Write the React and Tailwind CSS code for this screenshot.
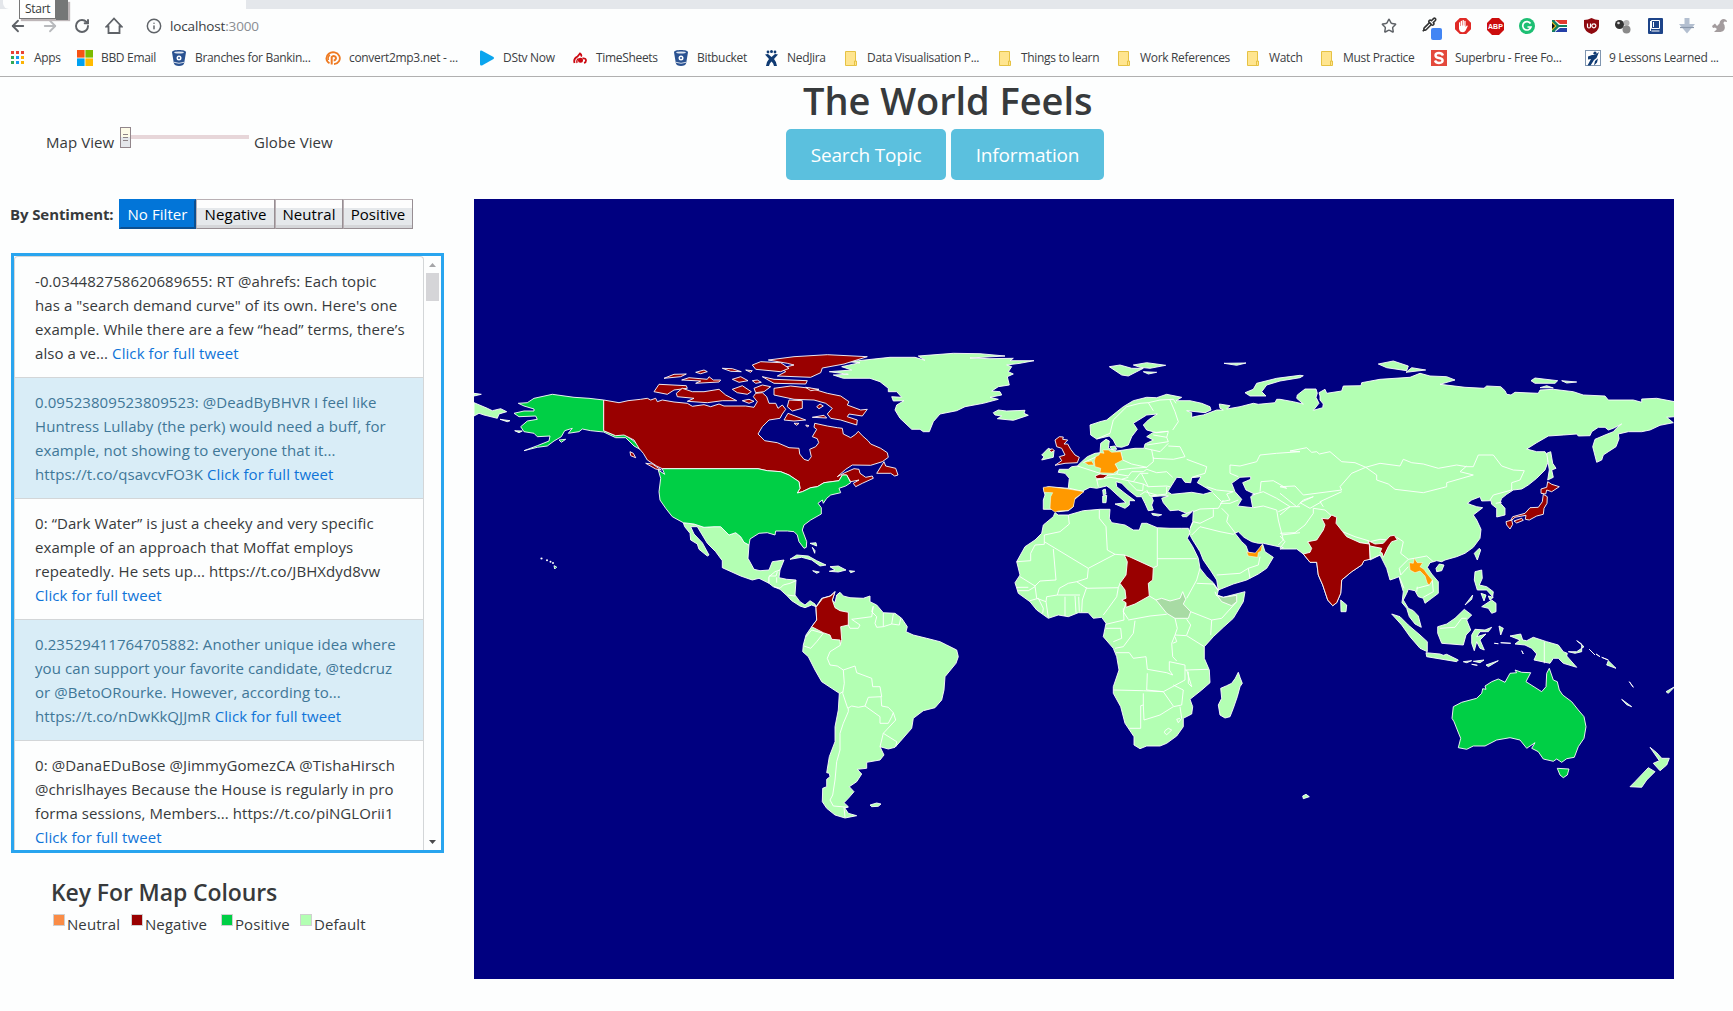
import React from "react";
import { ArrowLeft, ArrowRight, RotateCw, Info, Star, Pipette } from "lucide-react";

/* ---------- map data ----------
   Each ring is a list of points; a letter switches to the sheet
   whose origin the following points are measured from (3 units per pixel). */
const SHEETS = {
  A: [474, 340], B: [780, 340], C: [1000, 340],
  D: [1000, 500], E: [1280, 340], F: [1280, 500],
};
function pts(src) {
  let o = SHEETS.A;
  const out = [];
  for (const t of src.trim().split(/\s+/)) {
    if (SHEETS[t]) { o = SHEETS[t]; continue; }
    const [x, y] = t.split(",").map(Number);
    out.push((o[0] + x / 3).toFixed(1) + "," + (o[1] + y / 3).toFixed(1));
  }
  return out.join(" ");
}

const DEFAULT = "#b3ffb3";
const NEG = "#990000";
const POS = "#00cf45";
const NEU = "#ff9900";
const SEA = "#000080";

const LAND = [
  // Eurasia
  "C 270,255 300,245 320,240 345,220 370,200 400,182 440,172 470,173 500,163 545,172 528,182 570,182 605,190 630,200 633,210 615,218 560,212 575,218 575,232 592,228 610,225 650,210 670,210 660,205 658,192 690,197 680,207 720,200 760,190 775,193 825,188 830,178 E 0,178 40,185 70,192 50,175 52,165 75,147 108,147 112,160 108,172 117,190 100,211 128,203 130,192 120,180 120,168 117,158 135,148 140,160 185,153 190,138 243,137 245,128 300,118 390,112 420,100 450,108 500,110 525,120 480,133 555,142 612,145 620,138 662,140 675,152 680,163 693,165 705,157 775,160 780,150 820,148 880,155 910,165 975,168 985,180 1060,180 1085,187 1085,177 1130,175 1184,185 1184,230 1160,232 1180,248 1140,256 1110,270 1085,275 1045,275 1015,282 1017,296 1008,320 985,335 970,345 965,360 950,367 938,320 945,298 975,285 1000,275 1012,262 1025,252 1000,265 985,270 975,262 955,262 935,275 930,287 895,288 890,282 850,285 805,288 770,308 740,327 770,335 795,335 805,350 803,368 795,390 770,415 745,435 725,447 700,450 680,463 665,475 660,488 675,505 675,525 650,531 650,505 635,493 633,482 605,483 600,470 575,480 562,490 575,495 590,500 608,503 580,525 590,540 603,568 600,595 580,622 555,640 530,650 495,660 F 485,185 470,182 450,188 442,202 455,222 475,245 475,280 455,295 435,310 430,295 415,290 405,272 385,268 380,280 370,300 385,325 400,332 415,348 424,382 405,372 388,350 380,325 366,308 370,275 357,230 345,235 330,240 320,205 305,175 300,165 270,178 252,180 245,195 215,215 185,240 182,280 170,308 158,317 143,300 128,255 115,225 110,187 90,187 70,162 50,147 0,147 D 850,143 790,130 775,130 755,125 732,112 715,95 705,100 725,125 738,137 745,157 768,162 788,133 795,155 820,172 800,205 775,222 740,240 700,252 655,270 650,240 632,212 610,180 600,155 578,120 567,100 572,80 C 578,545 580,512 560,520 535,510 510,512 490,488 485,475 505,468 480,468 455,470 460,482 455,495 460,510 445,512 435,490 425,470 410,470 385,450 365,430 348,425 350,440 375,460 405,482 388,482 388,495 375,505 345,492 378,488 355,468 330,445 320,438 290,445 270,442 250,452 245,460 222,480 220,500 205,512 175,515 155,508 130,508 130,480 135,465 130,445 145,440 205,445 208,415 195,400 175,397 178,388 205,388 215,380 232,378 245,365 262,350 285,340 300,338 302,310 318,298 328,303 325,325 350,333 405,325 432,325 435,312 460,300 440,290 458,278 505,274 470,278 440,270 430,255 445,240 472,222 440,225 400,250 412,268 395,290 385,315 365,322 350,320 340,300 328,288 290,297 272,285",
  // Africa
  "D 165,38 175,45 205,45 250,32 300,28 330,28 328,55 335,68 375,75 400,90 418,90 425,70 440,70 472,83 510,85 545,85 565,85 570,97 562,115 578,140 595,175 600,205 620,230 640,248 655,270 652,285 670,292 735,275 730,305 700,355 670,382 640,410 613,440 613,475 628,510 630,548 605,570 570,598 578,620 575,642 550,655 550,680 530,708 500,730 480,738 440,738 420,746 402,735 402,710 375,670 362,620 340,580 340,560 357,510 350,470 340,445 310,410 318,370 305,352 280,355 265,338 235,338 205,350 175,345 145,355 110,330 90,305 55,280 45,248 60,225 50,185 75,140 105,120 125,100 130,75 160,50",
  "D 715,517 720,532 727,550 720,560 712,590 700,625 690,650 675,654 660,645 655,615 665,595 662,565 680,557 695,550 706,535",
  // Mexico
  "A 628,548 660,552 690,562 715,560 740,560 765,585 785,578 800,590 810,607 825,615 822,655 840,688 858,692 885,690 895,665 930,660 918,690 905,698 885,710 885,730 855,715 835,720 800,708 745,683 745,662 725,635 700,610 670,560 650,560 660,582 685,608 705,645 700,648 675,628 670,612 650,600 648,580 632,560",
  "B -33,730 -33,710 -15,695 0,690 -3,713 20,718 48,720 45,765 60,785 75,795 90,782 105,792 108,800 95,795 75,803 60,798 35,782 22,768 0,748 -20,740",
  // South America
  "B 108,800 125,775 150,768 165,755 157,780 165,788 170,765 180,757 190,768 210,773 250,775 270,768 270,785 290,795 310,818 345,820 365,835 382,860 378,875 400,885 440,895 480,905 500,915 530,930 535,950 528,970 495,1010 492,1050 485,1080 465,1103 430,1112 400,1135 395,1165 360,1205 345,1222 325,1227 300,1220 312,1245 300,1260 260,1267 260,1285 232,1288 245,1302 230,1325 208,1340 222,1355 205,1375 192,1388 205,1400 195,1405 205,1420 230,1427 195,1434 165,1425 140,1405 127,1385 128,1345 140,1340 140,1318 150,1310 148,1300 140,1298 148,1250 165,1205 165,1160 175,1110 178,1060 125,1025 105,990 85,950 68,935 70,915 78,885 95,860 110,840 108,810",
  "B 270,1395 290,1389 303,1392 295,1399 275,1400",
  // Greenland, Iceland
  "B 148,95 215,90 185,80 240,68 205,65 235,62 330,52 405,52 435,61 415,48 520,40 600,41 675,48 570,54 630,56 700,55 690,62 762,62 720,70 680,75 695,80 685,95 700,102 682,110 688,135 655,140 635,153 660,155 665,165 630,172 655,178 610,190 555,200 530,212 480,222 460,245 448,275 430,275 420,268 395,268 360,235 345,210 350,195 372,182 340,183 335,170 365,172 350,155 325,155 325,145 300,125 270,115 190,115 160,105 205,103",
  "B 640,218 655,210 680,213 735,211 732,220 745,226 700,241 652,236 665,228 645,225",
  // Caribbean
  "B 30,658 50,645 85,648 110,662 138,675 120,678 95,660 65,652",
  "B 150,680 175,678 198,690 175,696 148,694 165,690", "B 98,692 118,696 110,700", "B 208,692 224,694 212,698",
  "B 90,610 108,608 110,618", "B 97,622 105,632 104,640",
  // Eastern Siberia on the left edge
  "A 0,188 40,205 55,212 80,206 98,215 75,222 70,235 30,225 15,220 0,228", "A 0,160 22,163 0,168", "A 78,238 108,242 100,245", "A 122,272 145,273 135,278",
  // Ireland and small European islands
  "C 125,345 145,325 162,332 160,352 125,360 132,350", "C 308,450 316,447 318,462 310,466", "C 308,468 320,466 318,488 308,488",
  "C 455,520 485,524 475,528 458,525", "C 545,525 575,516 560,530 548,530", "C 330,320 345,318 350,328 335,328",
  // Arctic islands
  "C 328,80 360,75 395,85 430,85 410,95 385,108 365,105", "C 400,75 440,68 497,76 450,85 420,82", "C 430,95 470,97 445,102",
  "C 672,70 738,69 710,76", "C 735,158 760,148 770,130 830,115 900,106 E 70,107 60,113 0,123 C 800,135 785,155 798,168 750,168",
  "E 295,72 340,63 385,78 380,92 320,83", "E 378,97 395,83 437,90", "E 753,122 765,114 833,122 825,130 765,130", "E 780,143 800,137 820,144", "E 845,122 890,126 860,129",
  // Sakhalin
  "E 800,340 812,335 818,370 828,385 815,390 820,412 803,420 808,390",
  // Asian islands
  "F 583,160 598,145 602,150 592,180", "F 468,205 478,192 492,195 485,212 470,215", "F 182,300 200,315 198,335 183,335",
  "F 585,215 605,210 607,235 598,255 620,260 640,275 638,290 620,270 592,270 583,240", "F 603,280 618,285 612,303", "F 605,320 635,300 648,310 648,335 635,340 625,325",
  "F 625,288 640,292 630,300", "F 555,315 578,285 575,298",
  "F 335,342 360,350 385,375 420,405 442,425 442,455 420,445 390,410 365,375", "F 438,458 480,462 490,466 500,463 535,480 530,485 440,470",
  "F 473,380 500,372 525,355 553,328 575,345 560,360 572,390 558,405 550,435 485,430 473,400",
  "F 575,405 585,388 615,390 635,382 625,395 600,395 590,410 618,402 600,420 613,450 600,445 590,425 583,452 575,430",
  "F 550,485 575,482 560,488", "F 580,484 612,480 600,488", "F 575,493 592,496", "F 618,495 655,482 625,500",
  "F 657,378 670,385 662,405", "F 643,430 655,431", "F 662,428 692,430", "F 725,452 730,462",
  "F 690,408 722,402 728,420 740,422 760,412 800,425 835,435 850,455 862,460 860,468 890,502 850,490 835,475 820,475 810,490 762,480 770,462 755,445 735,435 705,432 720,420",
  "F 865,455 890,455 912,440 890,422 905,432 905,455 885,460", "F 928,448 945,465", "F 948,462 960,470", "F 965,472 985,480", "F 985,482 1008,505 980,495",
  "F 1048,545 1060,562", "F 1025,598 1055,620 1040,614", "F 1158,575 1184,560 1165,580",
  "F 1110,742 1130,758 1145,775 1168,775 1160,795 1140,812 1120,790 1138,782", "F 1105,803 1125,815 1100,840 1085,862 1050,860 1065,845",
  "F 68,888 78,883 88,890 70,896",
];

const SEAS = [
  "C 503,455 530,412 545,413 555,427 572,428 575,413 603,410 592,428 638,455 610,463 575,457 515,463",
  "C 695,430 720,412 752,410 752,418 728,428 738,450 765,463 752,470 758,503 713,498 725,478 705,455",
];

const NATIONS = [
  [POS, "A 389,180 345,175 300,172 235,163 180,175 160,188 133,190 150,198 180,207 180,213 150,213 120,220 135,230 185,228 190,238 160,243 140,260 150,275 180,280 190,290 228,288 225,303 190,317 150,332 190,322 220,318 240,303 262,290 272,272 295,265 283,280 315,275 325,267 350,272 389,276 425,293 455,293 480,318 498,328 497,318 475,300 450,282 425,287 389,272"],
  [NEG, "A 389,180 435,188 462,182 500,178 520,175 530,180 545,175 550,185 565,180 600,186 640,190 655,199 690,194 710,200 735,192 750,198 815,198 840,202 850,185 838,170 845,160 865,158 878,170 885,190 905,190 912,205 925,195 935,208 925,222 918,235 885,240 865,260 852,282 872,302 910,308 945,323 975,325 977,342 990,358 1003,362 1012,350 1007,328 1025,320 1034,308 1030,296 1015,290 1028,268 1020,262 1022,250 1060,258 1090,263 1105,265 1108,282 1130,293 1145,283 1153,274 1165,287 1182,302 1190,312 1220,325 1240,338 1243,352 1225,365 1190,376 1135,375 1115,388 1090,410 1112,398 1140,386 1155,388 1158,400 1175,412 1195,408 1198,415 1165,430 1145,440 1138,430 1155,420 1130,425 1118,405 1105,405 1095,422 1050,428 1030,440 1010,443 985,455 970,459 978,445 975,425 945,405 920,395 880,392 852,386 565,386 548,378 520,360 508,340 495,325 480,300 450,285 425,287 389,272"],
  [POS, "A 565,386 852,386 880,392 920,395 945,405 975,425 978,445 970,459 985,455 1010,443 1030,440 1050,428 1095,422 1105,405 1118,405 1130,428 1115,438 1095,445 1100,458 1070,465 1058,475 1048,490 1045,480 1032,490 1042,503 1042,522 1010,540 990,555 985,570 998,605 997,622 990,625 975,605 970,585 960,575 940,573 905,573 903,585 880,578 855,580 828,597 825,615 810,607 800,590 785,578 765,585 740,560 720,560 690,562 660,552 628,548 595,530 575,505 558,480 555,455 560,415 553,390 572,403"],
  [POS, "A 240,677 248,681 242,687"],
  [POS, "A 255,300 275,298 262,307"],
  [NEG, "A 883,60 960,50 1060,44 1180,50 1110,72 1045,84 1040,98 1010,112 910,108 935,95 920,85 960,75 940,70"],
  [NEG, "A 835,75 860,65 920,68 945,85 920,95 845,88"],
  [NEG, "A 865,110 900,118 1000,122 995,132 900,130"],
  [NEG, "A 900,145 950,138 1010,145 1060,160 1100,168 1125,185 1120,195 1160,210 1180,208 1165,228 1125,222 1120,230 1150,240 1148,255 1100,240 1070,235 1060,222 1075,205 1055,190 1020,180 960,178 900,165"],
  [NEG, "A 945,180 985,182 985,205 955,213 940,200"],
  [NEG, "A 930,240 942,220 995,240 960,243"], [NEG, "A 1015,232 1050,226 1058,234"], [NEG, "A 1028,200 1038,192 1048,198 1035,206"],
  [NEG, "A 540,155 555,133 637,137 640,145 600,150 580,163"],
  [NEG, "A 607,160 625,145 655,155 690,155 735,148 755,165 788,182 745,182 700,188 640,184 660,175 610,170"],
  [NEG, "A 570,115 600,103 637,102 620,110"], [NEG, "A 623,120 645,113 700,118 705,110 718,120 740,120 735,126 665,130 680,123"],
  [NEG, "A 775,118 800,110 822,122 795,127"], [NEG, "A 775,148 805,137 832,155 820,163 790,158"], [NEG, "A 745,85 775,86 802,95 770,94"],
  [NEG, "A 665,97 690,90 700,95 680,101"], [NEG, "A 815,90 835,92 830,97"], [NEG, "A 840,145 865,135 890,140 870,155 845,158"], [NEG, "A 805,182 825,178 840,184 825,190"],
  [NEG, "A 835,122 850,120 862,127 845,130"], [NEG, "A 995,142 1035,148 1010,152"], [NEG, "A 960,250 975,250 968,256"], [NEG, "A 995,255 1005,257 1000,261"],
  [NEG, "A 468,335 478,340 485,353 470,347"], [NEG, "A 515,370 535,372 562,390 545,387"], [NEG, "A 1208,400 1230,365 1235,378 1265,385 1272,405 1262,408 1250,400"],
  [NEG, "B 108,802 128,775 152,768 165,755 157,780 165,803 180,812 205,817 205,855 182,860 185,898 181,914 180,900 155,898 150,885 130,878 95,860 110,840"],
  [NEG, "C 165,300 178,290 190,291 188,298 203,300 192,312 203,312 212,328 225,345 238,352 232,368 195,370 165,376 185,362 178,350 195,345 185,325 170,320"],
  [NEG, "C 148,330 157,326 163,332 153,337"],
  [NEU, "C 283,362 287,350 297,345 300,338 312,340 308,330 325,330 335,337 362,335 368,360 345,372 355,390 340,400 300,398 302,385 285,380"],
  [NEU, "C 253,367 275,363 282,375 265,375"],
  [NEG, "C 285,408 300,402 325,405 310,415 290,416"],
  [NEU, "C 130,442 148,440 205,447 235,452 252,455 225,475 220,500 205,511 175,513 165,517 150,505 152,470 158,458 132,457"],
  [NEU, "D 740,156 766,159 787,133 784,152 775,158 773,172 745,168"],
  [NEG, "D 373,165 388,170 460,203 458,240 445,250 448,288 405,312 378,322 378,308 365,300 378,295 375,270 360,250 378,225 382,185"],
  ["#a8dba4", "D 468,300 485,295 510,303 540,295 548,275 557,298 550,312 572,335 565,355 525,355 500,340"],
  ["#a8dba4", "D 652,287 670,292 710,286 710,305 695,317 665,305"],
  [NEG, "F 125,55 145,57 155,45 170,52 168,70 188,95 200,110 240,128 268,132 270,178 252,182 245,195 215,215 185,240 182,280 170,308 158,317 143,300 128,255 115,225 110,187 90,187 70,162 90,157 95,145 83,125 110,120 130,90 135,75"],
  [NEG, "F 265,122 285,132 310,130 330,108 343,106 352,120 335,125 325,140 310,172 306,158 300,158 305,145 270,138"],
  [NEU, "F 403,175 412,188 428,188 420,200 432,208 440,220 457,240 448,255 442,250 435,228 420,213 405,218 390,210 388,188 400,190"],
  [NEG, "E 803,425 815,433 838,440 815,455 800,450 797,462 783,460 783,447 800,442"],
  [NEG, "E 790,463 802,470 801,490 792,505 790,523 770,528 748,540 736,538 738,526 705,532 690,545 698,530 735,520 750,503 775,502 787,485"],
  [NEG, "E 678,545 695,540 698,553 690,567 680,555"], [NEG, "E 702,543 725,535 730,541 710,549"],
  [POS, "F 520,620 545,607 590,595 605,580 608,566 618,568 615,558 635,545 655,537 675,547 690,520 710,518 705,510 725,517 752,518 738,545 785,575 798,560 800,520 808,505 820,540 832,545 838,570 848,585 875,605 895,630 912,650 918,680 912,715 895,740 883,772 860,776 845,787 830,777 820,784 790,777 775,755 755,745 765,728 740,745 720,720 690,713 650,720 615,738 580,738 560,748 535,743 542,715 532,690 522,665 516,655"],
  [POS, "F 832,805 867,807 862,825 850,833 840,825"],
];

const BORDERS = [
  // Central and South America
  "B -18,740 0,745 10,735 30,730 48,722", "B -10,712 -10,728", "B 22,765 45,768", "B -33,708 -12,708 -8,695",
  "B 205,818 205,855 210,865 235,865 240,855 215,838 275,830 280,800", "B 280,798 275,815 290,830 285,850 290,862 310,860 310,818", "B 310,860 335,852 358,855 362,835", "B 340,822 335,852",
  "B 78,890 95,870 130,880 110,905 92,925 72,918", "B 182,915 150,935 142,955 150,975 172,978 190,990 225,978 230,998 275,1015 278,1040 300,1040 305,1070 265,1072 255,1098 235,1102 215,1098 203,1105 188,1060 193,1030 190,990", "B 178,1062 188,1055",
  "B 255,1098 300,1130 300,1150 325,1150 335,1130 340,1118 325,1102 305,1098 303,1070", "B 340,1118 347,1140 310,1180 300,1220", "B 310,1180 350,1205 347,1220",
  "B 205,1105 205,1115 190,1150 180,1180 180,1230 170,1265 165,1320 158,1365 150,1380 160,1398 205,1402", "B 192,1402 195,1432",
  // Africa
  "D 50,185 92,182 92,160 105,135 133,133 133,105 180,95 208,72 205,45", "D 133,125 265,205 345,163 373,165", "D 160,147 168,240 120,243 105,258 60,230", "D 298,30 298,55 318,80 322,150 345,163",
  "D 472,83 472,198 460,203", "D 472,176 590,176", "D 265,205 262,235 230,245 205,250 178,265 172,285 140,290 138,305 110,295 105,258", "D 50,262 85,262", "D 52,272 85,272 105,260",
  "D 230,245 260,265 355,263 362,245", "D 260,262 247,300 245,335", "D 195,290 195,348", "D 225,288 228,338", "D 236,290 238,335", "D 172,285 240,285", "D 138,305 145,352", "D 90,302 115,295 130,325 128,340", "D 355,263 350,290 325,325 310,345",
  "D 370,325 372,360 318,373", "D 378,308 370,335 385,358", "D 385,360 450,348 500,343", "D 448,288 468,300", "D 600,205 590,240 560,295", "D 590,250 640,252 655,272", "D 645,275 650,288", "D 572,335 635,360 665,355 710,305", "D 635,360 632,405",
  "D 525,355 532,385 525,405 560,407 613,440", "D 560,358 572,375 560,405", "D 405,362 400,400 370,440 345,445", "D 318,385 362,385 365,415 340,425", "D 348,458 388,458 400,475 438,470 442,508 500,518 518,525 508,510 508,485 555,495 555,540",
  "D 525,405 515,430 518,470 530,483", "D 518,430 530,425 525,410", "D 442,520 440,570 490,575 555,540", "D 340,570 430,572 490,575", "D 555,510 625,508", "D 560,510 575,560 565,550 565,515",
  "D 430,580 430,615 422,617 422,685 388,685", "D 430,615 432,660 480,645 520,620 545,615 550,570 520,555", "D 490,575 520,618", "D 540,620 545,655 535,668 530,658 540,655", "D 495,692 505,685 515,690 500,704 493,698 495,692",
  // Europe
  "C 290,297 330,280 340,240 380,200 420,190 445,188 460,212", "C 445,188 480,180 520,178 528,190", "C 510,180 525,215 535,245 518,270", "C 505,275 500,292 460,285", "C 500,292 505,305 440,315", "C 505,310 480,335 435,325", "C 505,318 540,320 555,350 520,358 460,355 455,330",
  "C 362,335 368,360 395,372 440,382 460,365 460,352", "C 560,358 620,380 615,400 575,412", "C 250,368 290,350", "C 232,378 285,395 300,400 290,418 295,440", "C 208,445 252,455", "C 345,372 355,390 395,385 440,382", "C 355,390 350,402 325,405",
  "C 350,402 385,408 395,395 430,395 440,388 470,398 500,395 518,412", "C 290,420 330,412 365,418 385,412", "C 365,418 400,425 420,400 445,400", "C 400,425 430,432 445,440 425,402", "C 385,425 410,450 428,452 430,432", "C 445,440 500,438 510,440", "C 500,440 500,462 450,468 440,450", "C 420,465 435,455 470,465",
  "C 620,440 650,450 700,455 680,462 690,480 665,485 640,460", "C 580,515 600,507 655,505 670,480", "C 660,490 690,490 715,480", "C 570,565 580,545 600,550 640,530 640,508", "C 600,560 575,585", "C 600,560 660,575 700,583 705,578", "C 665,505 685,525 680,545 705,578",
  "C 760,503 790,498 830,510 835,540 850,600 835,615", "C 845,585 900,578", "C 755,465 790,455 830,475 870,500 835,515", "C 780,455 783,425 820,422 860,445 E 0,440 45,438 70,465 185,450 180,440 215,400 257,382",
  "C 690,400 690,375 720,378 770,365 780,345 830,340 900,335 E 30,333 80,323 95,337 110,335 118,342 150,335 185,365 225,368 257,382 300,370 360,378 370,358 395,368 430,372 475,385 530,375 560,380 580,380 595,345 640,345 665,378 700,390 733,392 720,420 695,428 695,450",
  "C 690,400 715,410", "E 257,382 290,405 290,420 325,432 345,448 430,458 500,440 500,428 580,405 540,395 560,378", "E 695,450 640,465 630,480", "E 647,490 665,487",
  "E 0,460 50,500 70,480 100,470 60,488 90,505 125,485", "E 0,525 30,500 60,500", "E 0,580 45,578 75,555 100,520 100,505 135,510 155,528", "E 130,500 120,485 185,455", "E 188,575 225,590 265,602 265,612 225,607 188,590", "E 270,605 300,598 330,600",
  "F 0,108 15,125 0,145", "F 268,132 270,180 300,165", "F 350,112 370,125 362,160 385,178 403,175 440,168 460,185", "F 385,178 358,205 362,225 385,200", "F 358,230 372,265", "F 410,265 448,255 457,240 460,275 430,292", "F 412,260 410,275",
  "F 480,385 525,382 545,355 560,355", "F 793,425 793,490",
  "D 650,225 720,220 745,205 775,195 780,170", "D 745,205 750,235",
];

function WorldMap() {
  return (
    <svg className="block h-[780px] w-[1200px] bg-[#000080]" viewBox="474 199 1200 780" strokeLinejoin="round">
      <g stroke="#fff" strokeWidth="0.9">
        {LAND.map((s, i) => <polygon key={i} points={pts(s)} fill={DEFAULT} />)}
        {SEAS.map((s, i) => <polygon key={i} points={pts(s)} fill={SEA} />)}
        {BORDERS.map((s, i) => <polyline key={i} points={pts(s)} fill="none" />)}
        {NATIONS.map(([c, s], i) => <polygon key={i} points={pts(s)} fill={c} strokeWidth={c === NEU ? 0.5 : 0.9} />)}
      </g>
      <g fill="#fff">
        <circle cx="541.5" cy="558.5" r="1.100" />
        <circle cx="547" cy="560.3" r="1" />
        <circle cx="550.5" cy="561.8" r="1" />
        <circle cx="553" cy="563" r="1" />
      </g>
    </svg>
  );
}

/* ---------- bookmark icons ---------- */
const AppsIcon = () => (
  <svg width="14" height="14" viewBox="0 0 14 14">
    {[0, 5, 10].map((y, r) =>
      [0, 5, 10].map((x, k) => <rect key={x + "-" + y} x={x} y={y} width="3" height="3" fill={r === 0 ? "#ea4335" : ["#34a853", "#1a9bf0", "#fbb305"][k]} />))}
  </svg>
);
const WindowsIcon = () => (
  <svg width="16" height="16" viewBox="0 0 16 16">
    <path fill="#f65314" d="M0 0h7.600v7.600H0z" /><path fill="#7cbb00" d="M8.400 0H16v7.600H8.400z" />
    <path fill="#00a1f1" d="M0 8.400h7.600V16H0z" /><path fill="#ffbb00" d="M8.400 8.400H16V16H8.400z" />
  </svg>
);
const BucketIcon = () => (
  <svg width="14" height="16" viewBox="0 0 14 16">
    <path fill="#2a5291" d="M0 2.200C0 .8 3 0 7 0s7 .8 7 2.200L12.200 13c-.2 1.800-2.400 3-5.200 3s-5-1.200-5.200-3z" />
    <ellipse cx="7" cy="2.400" rx="4.800" ry="1" fill="#dfe6f1" />
    <circle cx="7" cy="8" r="2.500" fill="#fff" /><circle cx="7" cy="8" r="1" fill="#2a5291" />
    <path d="M2 12.300q5 2 10 0" stroke="#fff" strokeWidth=".8" fill="none" />
  </svg>
);
const ConvertIcon = () => (
  <svg width="16" height="16" viewBox="0 0 16 16" fill="none" stroke="#ee7a22">
    <path strokeWidth="1.800" d="M4.500 13.300A6.700 6 0 1 1 9 14.200" />
    <path strokeWidth="2" d="M6.700 14.500V7a2.300 2.300 0 1 1 2 3.500" /><path strokeWidth="1.500" d="M3.500 10A4 4 0 0 1 5 5" />
  </svg>
);
const PlayIcon = () => (
  <svg width="16" height="16" viewBox="0 0 16 16"><path fill="#0aa5ee" d="M1 2q0-2 2-1.300L14.500 7q1.200 1 0 2L3 15.500Q1 16 1 14z" /></svg>
);
const TimeIcon = () => (
  <svg width="14" height="12" viewBox="0 0 14 12" fill="none" stroke="#cc0a12">
    <path strokeWidth="1.800" d="M1.600 11Q0 7 4.500 4.500L7 1.500q2 1.500 1 3M9.500 6.500q3.500-.5 3.500 2 0 2-2 2.500" />
    <circle cx="7.500" cy="8.300" r="2.500" fill="#cc0a12" stroke="none" /><path strokeWidth="1.300" d="M4 11q-.8-3 1.500-4.500" />
  </svg>
);
const JiraIcon = () => (
  <svg width="13" height="16" viewBox="0 0 13 16" fill="#103b73">
    <circle cx="3" cy="2" r="1.400" /><circle cx="6.500" cy="1.500" r="1.500" /><circle cx="10" cy="2" r="1.400" />
    <path d="M0 4.500l3-.5 3.500 3L10 4l3 .5-4 4.500q2 2 3 7H9q-.5-3-2.500-4.500Q4.500 13 4 16H1q.5-4.500 3-7z" />
  </svg>
);
const FolderIcon = () => (
  <svg width="13" height="15" viewBox="0 0 13 15"><path d="M.5.5h10v9.500h1v4.500H.5z" fill="#ffe58f" stroke="#e6c244" /><path d="M9.500 14V10h1.500" fill="none" stroke="#e6c244" /></svg>
);
const BruIcon = () => (
  <svg width="16" height="16" viewBox="0 0 16 16"><rect width="16" height="16" fill="#e4493c" /><path d="M12 5.500Q11 3 8 3 4.500 3 4.500 5.300T8 8t3.600 2.600T8 13Q5 13 4 10.500" fill="none" stroke="#fff" strokeWidth="2.400" /></svg>
);
const LessonIcon = () => (
  <svg width="16" height="16" viewBox="0 0 16 16"><rect x=".5" y=".5" width="15" height="15" fill="#fff" stroke="#8096b0" /><circle cx="10" cy="3.200" r="1.600" fill="#103b73" /><path d="M3 6.500l4-1.500h3l4-3-2.500 6L9 10l-3.500 5.500H2.500L6 9 3 9.500zM10 11l3-2.500-1 4-3 3z" fill="#103b73" /></svg>
);

const BOOKMARKS = [
  [AppsIcon, "Apps", "w-[66px]", "w-[23px]"],
  [WindowsIcon, "BBD Email", "w-[95px]", "w-[24px]"],
  [BucketIcon, "Branches for Bankin...", "w-[153px]", "w-[23px]"],
  [ConvertIcon, "convert2mp3.net - ...", "w-[154px]", "w-[24px]"],
  [PlayIcon, "DStv Now", "w-[94px]", "w-[24px]"],
  [TimeIcon, "TimeSheets", "w-[101px]", "w-[23px]"],
  [BucketIcon, "Bitbucket", "w-[91px]", "w-[23px]"],
  [JiraIcon, "NedJira", "w-[80px]", "w-[22px]"],
  [FolderIcon, "Data Visualisation P...", "w-[154px]", "w-[22px]"],
  [FolderIcon, "Things to learn", "w-[119px]", "w-[22px]"],
  [FolderIcon, "Work References", "w-[129px]", "w-[22px]"],
  [FolderIcon, "Watch", "w-[74px]", "w-[22px]"],
  [FolderIcon, "Must Practice", "w-[110px]", "w-[22px]"],
  [BruIcon, "Superbru - Free Fo...", "w-[154px]", "w-[24px]"],
  [LessonIcon, "9 Lessons Learned ...", "w-[148px]", "w-[24px]"],
];

/* ---------- extension icons ---------- */
const EXTENSIONS = [
  <span className="relative block h-[18px] w-[18px]"><Pipette size={15} strokeWidth={2.500} className="text-[#333]" /><span className="absolute top-[11px] left-[9px] h-[12px] w-[11px] rounded-[2px] bg-[#4285f4]" /></span>,
  <svg width="16" height="16" viewBox="0 0 16 16"><path fill="#e02a26" d="M4.800 0h6.400L16 4.800v6.400L11.200 16H4.800L0 11.200V4.800z" /><path fill="#fff" d="M4 4.500q.6-.6 1.200 0V8h.5V3q.6-.7 1.300 0v4.500h.5V2.300q.7-.7 1.400 0v5.200h.4V3q.7-.7 1.300 0v6l1.200-1.500q1-.3 1 .6l-2.300 4.700q-.8 1.400-2.500 1.400-3.500 0-4-3.500z" /></svg>,
  <svg width="17" height="17" viewBox="0 0 17 17"><path fill="#cc0d0d" d="M5 0h7l5 5v7l-5 5H5l-5-5V5z" /><text x="8.500" y="11.200" textAnchor="middle" fontSize="7" fontWeight="700" fill="#fff" fontFamily="Liberation Sans, sans-serif">ABP</text></svg>,
  <svg width="16" height="16" viewBox="0 0 16 16"><circle cx="8" cy="8" r="8" fill="#1dbf73" /><path d="M11.500 5.500A4.200 4.200 0 1 0 12 9H8.500" fill="none" stroke="#fff" strokeWidth="1.700" /></svg>,
  <svg width="15" height="12" viewBox="0 0 15 12"><path fill="#e23a2e" d="M0 0h15v4H6z" /><path fill="#2540a8" d="M0 12h15V8H6z" /><path fill="#fff" d="M3 0l5 4h7v4H8l-5 4z" /><path fill="#14805e" d="M0 0h2l5 5h8v2H7l-5 5H0z" /><path fill="#f3c21c" d="M0 1.500L4.500 6 0 10.500z" /><path fill="#111" d="M0 3l3 3-3 3z" /></svg>,
  <svg width="15" height="16" viewBox="0 0 15 16"><path fill="#8f0a10" d="M7.500 0Q11 2 15 2v6q0 5-7.500 8Q0 13 0 8V2q4 0 7.500-2z" /><path d="M3.500 5.500v3q0 1.500 1.500 1.500T6.500 8.500v-3M9.800 5.800a2 2 0 1 0 .1 0" stroke="#fff" strokeWidth="1.200" fill="none" /></svg>,
  <svg width="16" height="16" viewBox="0 0 16 16"><circle cx="11.500" cy="5" r="3" fill="#b5b5b5" /><circle cx="11.500" cy="11.500" r="4" fill="#8a8a8a" /><circle cx="4.500" cy="6.500" r="4.500" fill="#333" /><circle cx="3.500" cy="5" r="1.300" fill="#ddd" /></svg>,
  <svg width="15" height="16" viewBox="0 0 15 16"><rect width="15" height="16" rx="1" fill="#1d4489" /><path d="M3.500 2.500h8v8h-8zM3.500 13h8M2.500 3v10M5.500 4v5" stroke="#fff" strokeWidth="1" fill="none" /></svg>,
  <svg width="16" height="16" viewBox="0 0 16 16"><path d="M5.500 0h5v6H16l-8 9.500L0 6h5.500z" fill="#b3bfd0" /><path d="M1 9.500h14" stroke="#8a98ac" strokeWidth="1.200" /></svg>,
  <svg width="15" height="14" viewBox="0 0 15 14"><path d="M0 7l3-2.500L5 7l2.500-2.500Q8 0 12 0q3 .5 3 3l-2.500-.500Q10.500 4 12.500 6 14 12 8.500 13H2l3-3-2-1.500L1 9z" fill="#a39c9e" /></svg>,
];

const TWEETS = [
  ["-0.034482758620689655: RT @ahrefs: Each topic", "has a \"search demand curve\" of its own. Here's one", "example. While there are a few “head” terms, there’s", "also a ve... |"],
  ["0.09523809523809523: @DeadByBHVR I feel like", "Huntress Lullaby (the perk) would need a buff, for", "example, not showing to everyone that it...", "https://t.co/qsavcvFO3K |"],
  ["0: “Dark Water” is just a cheeky and very specific", "example of an approach that Moffat employs", "repeatedly. He sets up... https://t.co/JBHXdyd8vw", "|"],
  ["0.23529411764705882: Another unique idea where", "you can support your favorite candidate, @tedcruz", "or @BetoORourke. However, according to...", "https://t.co/nDwKkQJJmR |"],
  ["0: @DanaEDuBose @JimmyGomezCA @TishaHirsch", "@chrislhayes Because the House is regularly in pro", "forma sessions, Members... https://t.co/piNGLOrii1", "|"],
];

const bevel = "border border-[#b9b0b4] border-r-[#978e93] border-b-[#978e93] bg-[linear-gradient(#fdfdfd_0_8px,#e5e8eb_8px_25px,#d5d6d9_25px)] text-black";
const swatch = "-mt-[8px] mr-[2px] h-3 w-3 border border-[#d0d0d0]";

export default function App() {
  return (
    <div className="h-[1011px] w-[1733px] overflow-hidden bg-[#fdfefe] font-['Open_Sans','Noto_Sans',sans-serif] text-[15px] leading-6 tracking-[0.08px] text-[#373a3c]">
      {/* browser chrome */}
      <header className="relative h-[77px] border-b border-[#b0b0b0]">
        <div className="flex h-[9px] bg-[#e4e7eb]"><div className="ml-[3px] w-[243px] rounded-bl-md bg-[#fdfefe]" /></div>
        <div className="flex h-[34px] items-center">
          <div className="ml-[9px] flex w-[146px] items-center">
            <ArrowLeft size={18} strokeWidth={2.400} className="text-[#5f6368]" />
            <ArrowRight size={18} strokeWidth={2.400} className="ml-[14px] text-[#b8babd]" />
            <RotateCw size={16} strokeWidth={2.900} className="ml-[15px] text-[#5f6368]" />
            <svg className="ml-[15px]" width="18" height="18" viewBox="0 0 18 18" fill="none" stroke="#5f6368" strokeWidth="1.800"><path d="M1.500 9.500L9 1.500l7.500 8h-2V16h-11V9.500z" /></svg>
          </div>
          <Info size={16} strokeWidth={2.200} className="-ml-[9px] text-[#5f6368]" />
          <span className="ml-2 text-[13.500px] tracking-[-0.15px] text-[#3a3d42]">localhost<span className="text-[#8a8d92]">:3000</span></span>
          <Star size={16} strokeWidth={2.200} className="ml-auto text-[#5f6368]" />
          <div className="mr-[-2px] ml-[18px] flex">
            {EXTENSIONS.map((e, i) => <div key={i} className="flex w-8 items-center justify-center">{e}</div>)}
          </div>
        </div>
        <nav className="flex h-[30px] items-center pl-[11px] text-[12px] tracking-[-0.32px] whitespace-nowrap text-[#3c4043]">
          {BOOKMARKS.map(([Icon, label, w, iw]) => (
            <div key={label} className={`flex shrink-0 items-center ${w}`}>
              <span className={`shrink-0 ${iw}`}><Icon /></span><span>{label}</span>
            </div>
          ))}
        </nav>
        <div className="absolute top-0 left-[19px] flex h-[19px] shadow-[2px_2px_1px_#bdb6b8]">
          <div className="w-[37px] border-x border-b border-[#777] bg-white pl-[5px] text-[12px] leading-[18px] tracking-[-0.3px]">Start</div>
          <div className="h-[20px] w-[12px] bg-[#757777]" />
        </div>
      </header>

      <div className="flex">
        <aside className="w-[474px] shrink-0 pl-[11px]">
          <div className="mt-[47px] flex h-9 items-center pl-[35px] whitespace-nowrap">
            <span className="w-[74px]">Map View</span>
            <div className="-mt-[10px] flex items-center">
              <div className="flex h-[21px] w-[11px] flex-col items-center justify-center gap-[2px] border border-[#92868b] bg-[linear-gradient(#fdfbe8_50%,#e4e7eb_50%)]">
                <i className="h-px w-[5px] bg-[#8d8487]" /><i className="h-px w-[5px] bg-[#8d8487]" /><i className="h-px w-[5px] bg-[#8d8487]" />
              </div>
              <div className="h-1 w-[118px] bg-[#e7d6d9]" />
            </div>
            <span className="ml-[5px]">Globe View</span>
          </div>
          <div className="mt-[39px] flex h-[30px] items-center whitespace-nowrap">
            <b className="-ml-px w-[109px] tracking-[-0.1px]">By Sentiment:</b>
            <span className="flex h-[30px] w-[77px] items-center justify-center border-2 border-[#0275d8] border-r-[#0b4f91] border-b-[#0b4f91] bg-[#0275d8] text-white">No Filter</span>
            <span className={`flex h-[30px] w-[79px] items-center justify-center ${bevel}`}>Negative</span>
            <span className={`flex h-[30px] w-[68px] items-center justify-center ${bevel}`}>Neutral</span>
            <span className={`flex h-[30px] w-[70px] items-center justify-center ${bevel}`}>Positive</span>
          </div>
          <div className="mt-6 flex h-[600px] w-[433px] overflow-hidden border-[3px] border-[#29a5ef]">
            <div className="w-[410px]">
              {TWEETS.map((lines, i) => (
                <div key={i} className={`h-[121px] border-x border-t border-[#d3d6d8] pt-3 pl-5 whitespace-nowrap ${i === 0 ? "rounded-t" : ""} ${i % 2 ? "bg-[#d9edf7] text-[#3f7797]" : ""}`}>
                  {lines.map((l, k) => (
                    <div key={k}>{l.replace("|", "")}{l.includes("|") && <a className="text-[#0f74d8]">Click for full tweet</a>}</div>
                  ))}
                </div>
              ))}
            </div>
            <div className="flex w-[17px] flex-col items-center pt-[7px] pb-[6px]">
              <svg width="7" height="4" viewBox="0 0 7 4"><path d="M0 4l3.500-4L7 4z" fill="#a5a5a8" /></svg>
              <div className="mt-[6px] h-7 w-[13px] bg-[#d5d5d8]" />
              <svg className="mt-auto" width="7" height="4" viewBox="0 0 7 4"><path d="M0 0l3.500 4L7 0z" fill="#4a4a4c" /></svg>
            </div>
          </div>
          <h2 className="mt-[23px] pl-[40px] text-[23px] leading-8 font-semibold tracking-[-0.1px] whitespace-nowrap">Key For Map Colours</h2>
          <div className="mt-1 flex items-center pl-[42px] whitespace-nowrap">
            <i className={`${swatch} bg-[#fa8c46]`} /><span className="w-[64px]">Neutral</span>
            <i className={`${swatch} bg-[#990000]`} /><span className="w-[76px]">Negative</span>
            <i className={`${swatch} bg-[#00cf45]`} /><span className="w-[65px]">Positive</span>
            <i className={`${swatch} bg-[#b3ffb3]`} /><span>Default</span>
          </div>
        </aside>
        <main className="w-[1200px]">
          <h1 className="h-[52px] pl-[329px] text-[38px] leading-[47px] font-semibold tracking-[-0.05px] whitespace-nowrap">The World Feels</h1>
          <div className="flex h-[51px] gap-[5px] pl-[312px] text-[19px] tracking-[-0.15px] whitespace-nowrap text-white">
            <button className="w-[160px] rounded-[5px] bg-[#5bc0de] pt-px">Search Topic</button>
            <button className="w-[153px] rounded-[5px] bg-[#5bc0de] pt-px">Information</button>
          </div>
          <div className="mt-[19px]"><WorldMap /></div>
        </main>
      </div>
    </div>
  );
}
